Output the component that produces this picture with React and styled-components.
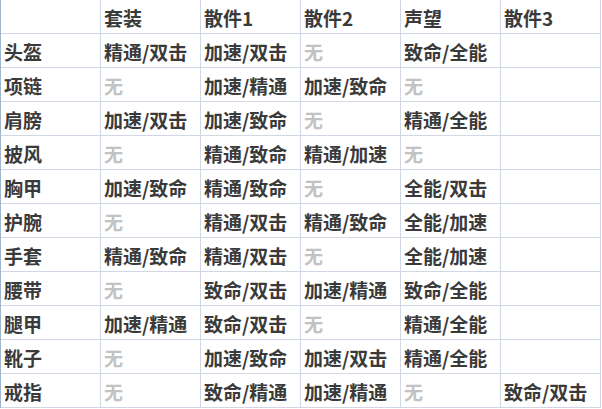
import React from "react";
import styled, { createGlobalStyle } from "styled-components";

const GlobalStyle = createGlobalStyle`
  body {
    margin: 0;
    background: #ffffff;
  }
`;

const header = ["", "套装", "散件1", "散件2", "声望", "散件3"];

const rows = [
  ["头盔", "精通/双击", "加速/双击", "无", "致命/全能", ""],
  ["项链", "无", "加速/精通", "加速/致命", "无", ""],
  ["肩膀", "加速/双击", "加速/致命", "无", "精通/全能", ""],
  ["披风", "无", "精通/致命", "精通/加速", "无", ""],
  ["胸甲", "加速/致命", "精通/致命", "无", "全能/双击", ""],
  ["护腕", "无", "精通/双击", "精通/致命", "全能/加速", ""],
  ["手套", "精通/致命", "精通/双击", "无", "全能/加速", ""],
  ["腰带", "无", "致命/双击", "加速/精通", "致命/全能", ""],
  ["腿甲", "加速/精通", "致命/双击", "无", "精通/全能", ""],
  ["靴子", "无", "加速/致命", "加速/双击", "精通/全能", ""],
  ["戒指", "无", "致命/精通", "加速/精通", "无", "致命/双击"],
];

const App = () => {
  return (
    <>
      <GlobalStyle />
      <Sheet>
        {header.map((h, i) => (
          <Cell key={"h" + i} $header>
            {h}
          </Cell>
        ))}
        {rows.map((row) =>
          row.map((v, i) => (
            <Cell key={row[0] + i} $empty={v === "无"}>
              {v}
            </Cell>
          ))
        )}
      </Sheet>
    </>
  );
};

const Sheet = styled.div`
  display: grid;
  grid-template-columns: repeat(6, 100px);
  width: max-content;
  border-left: 1px solid #9eb6ce;
  font-family: "Noto Sans CJK SC", "Microsoft YaHei", sans-serif;
  font-weight: 700;
  font-size: 19px;
  color: #3a3a3a;
`;

const Cell = styled.div`
  box-sizing: border-box;
  height: ${(p) => (p.$header ? "34px" : "34px")};
  display: flex;
  align-items: center;
  padding: 1px 0 0 3px;
  border-right: 1px solid #d0d7e5;
  border-bottom: 1px solid #d0d7e5;
  white-space: nowrap;
  overflow: hidden;
  line-height: 1;
  color: ${(p) => (p.$empty ? "#c2c2c2" : "#3a3a3a")};
`;

export default App;
